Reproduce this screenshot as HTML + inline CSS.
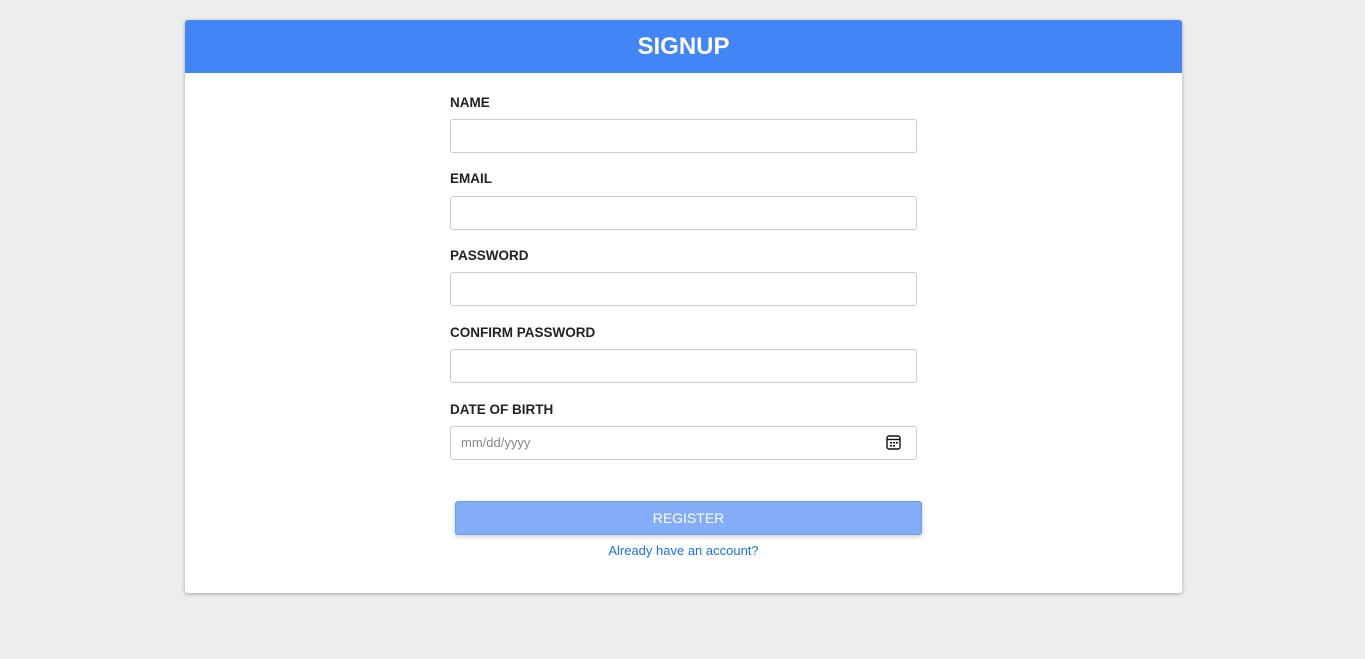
<!DOCTYPE html>
<html><head><style>
body{margin:0;background:#ededed;font-family:"Liberation Sans",sans-serif;width:1365px;height:659px;overflow:hidden;position:relative}
.card{position:absolute;left:185px;top:20px;width:997px;height:573px;background:#fff;border-radius:3px;box-shadow:0 1px 4px rgba(0,0,0,.3);overflow:hidden}
.hd{height:53px;background:#4285f4;color:#fff;font-weight:bold;font-size:24px;text-align:center;line-height:53px}
.lbl{position:absolute;left:265px;font-size:13.5px;color:#222;font-weight:bold;top:0}
.in{position:absolute;left:265px;width:465px;height:32px;border:1px solid #ccc;border-radius:3px}
.btn{position:absolute;left:270px;top:481px;width:465px;height:32px;background:#83aef7;border:1px solid #6a9cf2;border-radius:3px;color:#fff;text-align:center;line-height:32px;font-size:14px;box-shadow:0 2px 5px rgba(0,0,0,.2)}
.lnk{position:absolute;left:0;width:997px;top:523px;text-align:center;color:#1a73e8;font-size:13px}
</style></head><body>
<div class="card">
<div class="hd">SIGNUP</div>
<div class="lbl" style="top:75px">NAME</div><div class="in" style="top:99px"></div>
<div class="lbl" style="top:151px">EMAIL</div><div class="in" style="top:176px"></div>
<div class="lbl" style="top:228px">PASSWORD</div><div class="in" style="top:252px"></div>
<div class="lbl" style="top:305px">CONFIRM PASSWORD</div><div class="in" style="top:329px"></div>
<div class="lbl" style="top:382px">DATE OF BIRTH</div><div class="in" style="top:406px"><span style="position:absolute;left:10px;top:8px;font-size:13px;color:#888">mm/dd/yyyy</span>
<svg style="position:absolute;left:435px;top:8px" width="15" height="15" viewBox="0 0 15 15"><rect x="1" y="1" width="13" height="13" rx="2" fill="none" stroke="#111" stroke-width="1.4"/><line x1="1" y1="4.5" x2="14" y2="4.5" stroke="#111" stroke-width="1.4"/><g fill="#111"><rect x="4" y="7" width="2" height="1.5"/><rect x="7" y="7" width="2" height="1.5"/><rect x="10" y="7" width="2" height="1.5"/><rect x="4" y="10" width="2" height="1.5"/><rect x="7" y="10" width="2" height="1.5"/></g></svg></div>
<div class="btn">REGISTER</div>
<div class="lnk">Already have an account?</div>
</div>
</body></html>
